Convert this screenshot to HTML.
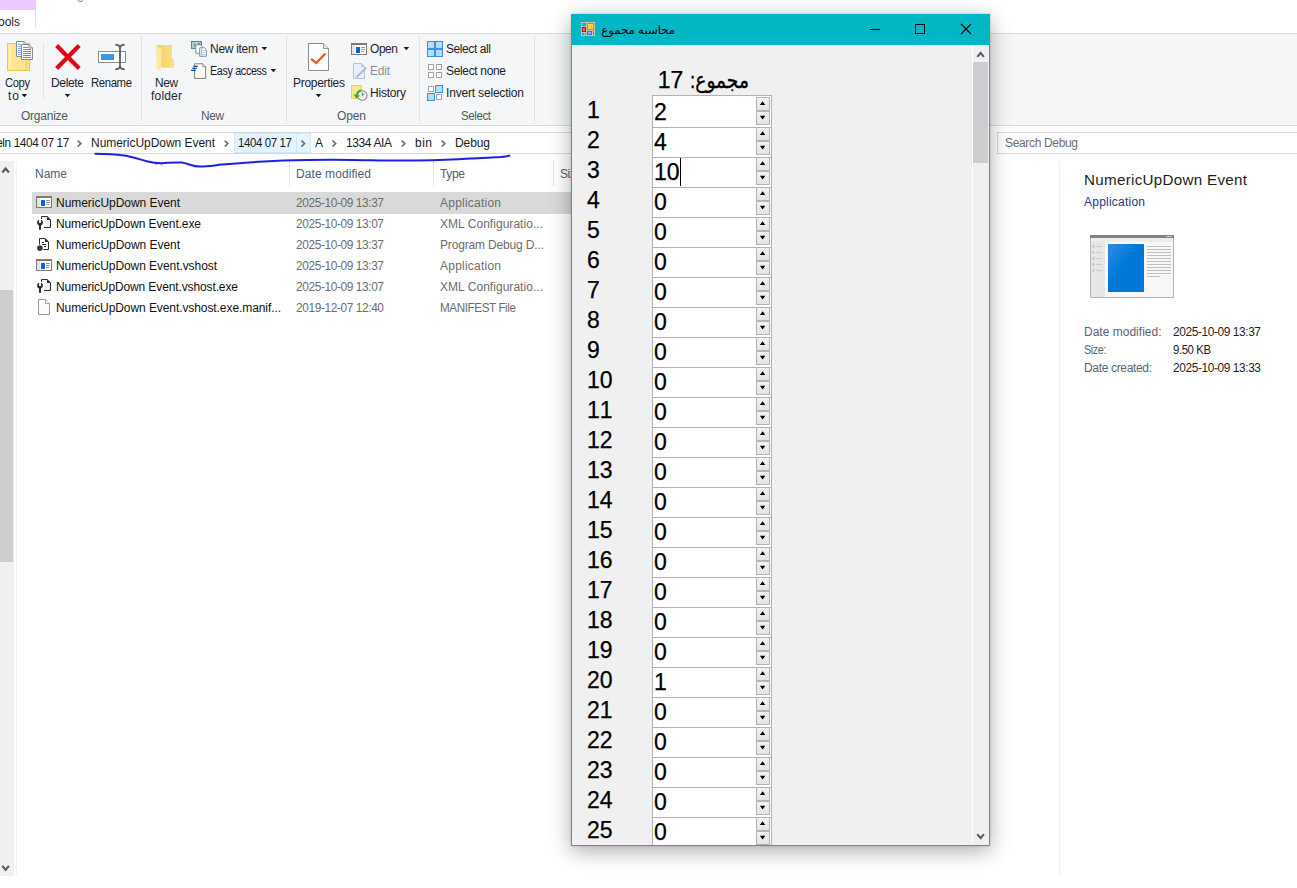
<!DOCTYPE html>
<html lang="en"><head><meta charset="utf-8"><title>Debug</title>
<style>
html,body{margin:0;padding:0;background:#fff;}
body{width:1297px;height:888px;overflow:hidden;font-family:"Liberation Sans","DejaVu Sans",sans-serif;}
#root{position:relative;width:1297px;height:888px;overflow:hidden;background:#fff;}
.a{position:absolute;}
.t{position:absolute;white-space:nowrap;font-family:"Liberation Sans","DejaVu Sans",sans-serif;}
svg{position:absolute;overflow:visible;}

.nud{position:absolute;left:652px;width:120px;height:33px;box-sizing:border-box;border:1px solid #b0b2b8;background:#fff;}
.nud i{position:absolute;left:103px;width:14px;height:14px;box-sizing:border-box;border:1px solid #b4b4b4;background:linear-gradient(#f3f3f3,#e4e4e4);}
.nud .ub{top:1px;}
.nud .db{top:15px;}

</style></head>
<body>
<div id="root">
<!-- tab strip -->
<div class="a" style="left:0;top:0;width:36px;height:10px;background:#ebcbfb"></div>
<div class="a" style="left:35px;top:10px;width:1px;height:18px;background:#e3e3e3"></div>
<!-- ribbon -->
<div class="a" id="ribbon" style="left:0;top:33px;width:1297px;height:93px;background:#f5f6f7;border-top:1px solid #dadbdc;border-bottom:1px solid #dadbdc;box-sizing:border-box"></div>
<div class="a" style="left:43px;top:43px;width:1px;height:55px;background:#e2e3e4"></div>
<div class="a" style="left:141px;top:36px;width:1px;height:86px;background:#e2e3e4"></div>
<div class="a" style="left:286px;top:36px;width:1px;height:86px;background:#e2e3e4"></div>
<div class="a" style="left:419px;top:36px;width:1px;height:86px;background:#e2e3e4"></div>
<div class="a" style="left:534px;top:36px;width:1px;height:86px;background:#e2e3e4"></div>
<!-- address bar -->
<div class="a" style="left:-2px;top:132px;width:990px;height:22px;border:1px solid #d9d9d9;box-sizing:border-box;background:#fff"></div>
<div class="a" style="left:234px;top:133px;width:77px;height:20px;background:#e5f3ff;border:1px solid #cce8ff;box-sizing:border-box"></div>
<div class="a" style="left:296px;top:133px;width:1px;height:20px;background:#cce8ff"></div>
<div class="a" style="left:997px;top:132px;width:310px;height:22px;border:1px solid #d9d9d9;box-sizing:border-box;background:#fff"></div>
<!-- nav pane scrollbar -->
<div class="a" style="left:0;top:161px;width:14px;height:715px;background:#f0f0f0"></div>
<div class="a" style="left:16px;top:161px;width:1px;height:715px;background:#f4f4f4"></div>
<div class="a" style="left:0;top:290px;width:13px;height:272px;background:#cdcdcd"></div>
<!-- column header separators -->
<div class="a" style="left:289px;top:161px;width:1px;height:25px;background:#e5e5e5"></div>
<div class="a" style="left:433px;top:161px;width:1px;height:25px;background:#e5e5e5"></div>
<div class="a" style="left:553px;top:161px;width:1px;height:25px;background:#e5e5e5"></div>
<!-- selected row -->
<div class="a" style="left:32px;top:192px;width:950px;height:22px;background:#d9d9d9"></div>
<!-- details pane sep -->
<div class="a" style="left:1059px;top:161px;width:1px;height:715px;background:#f0f0f0"></div>

<svg id="icons" style="left:0;top:0" width="1297" height="888" viewBox="0 0 1297 888">
<defs>
<linearGradient id="gfold" x1="0" y1="0" x2="1" y2="0"><stop offset="0" stop-color="#ffe896"/><stop offset="1" stop-color="#ffe184"/></linearGradient>
<linearGradient id="gnf" x1="0" y1="0" x2="1" y2="0"><stop offset="0" stop-color="#f3cf62"/><stop offset="1" stop-color="#fbe087"/></linearGradient>
<linearGradient id="gblue" x1="0" y1="0" x2="1" y2="1"><stop offset="0" stop-color="#2f8de2"/><stop offset="0.45" stop-color="#0078d7"/><stop offset="1" stop-color="#0078d7"/></linearGradient>
<linearGradient id="gbtn" x1="0" y1="0" x2="0" y2="1"><stop offset="0" stop-color="#f2f2f2"/><stop offset="1" stop-color="#e3e3e3"/></linearGradient>
</defs>
<!-- Copy to -->
<g>
<rect x="7.5" y="43.5" width="22" height="27" fill="url(#gfold)" stroke="#eac653"/>
<rect x="9.5" y="45" width="1" height="24" fill="#fff3c4"/>
<rect x="24.5" y="60" width="1" height="10" fill="#fff0b8"/>
<rect x="25.5" y="60" width="0.8" height="10" fill="#eac653"/>
<path d="M16.5 41.5 H24 L27.5 45 V56.5 H16.5 Z" fill="#fff" stroke="#8c8c8c"/>
<path d="M24 41.5 V45 H27.5" fill="none" stroke="#8c8c8c"/>
<g stroke="#7fb0f5" stroke-width="1"><path d="M18 44.5H21 M18 46.5H21 M18 48.5H21 M18 50.5H21 M18 52.5H21 M18 54.5H21"/></g>
<path d="M21.5 44.5 H29 L32.5 48 V59.5 H21.5 Z" fill="#fff" stroke="#8c8c8c"/>
<path d="M29 44.5 V48 H32.5" fill="none" stroke="#8c8c8c"/>
<g stroke="#4a90f0" stroke-width="1"><path d="M23 47.5H28 M23 49.5H31 M23 51.5H31 M23 53.5H31 M23 55.5H31 M23 57.5H31"/></g>
</g>
<!-- Delete X -->
<path d="M56.6 45.6 L79.2 68.4 M79.2 45.6 L56.6 68.4" stroke="#e30613" stroke-width="4.2" fill="none"/>
<!-- Rename -->
<g>
<rect x="98.5" y="51.5" width="27" height="11" fill="#fff" stroke="#8c8c8c"/>
<rect x="101" y="54" width="13" height="6" fill="#3c96e8"/>
<path d="M115.3 44.6 Q119.4 44.8 120 47.5 Q120.6 44.8 124.7 44.6 M115.3 69.4 Q119.4 69.2 120 66.5 Q120.6 69.2 124.7 69.4 M120 46.5 V67.5" fill="none" stroke="#5c5c5c" stroke-width="1.8"/>
</g>
<!-- New folder -->
<g>
<path d="M156.3 45 H172 V58.5 L174 59.5 V67.8 H158 Z" fill="url(#gnf)"/>
<path d="M156.3 45 L161.8 49.6 L161 71.6 L156.3 68.6 Z" fill="#fce9a6"/>
</g>
<!-- New item -->
<g>
<rect x="191.6" y="41.6" width="9.8" height="6.8" fill="#cfe6f5" stroke="#3d8eb9" stroke-width="1.2"/>
<rect x="193.5" y="43.2" width="2" height="3.5" fill="#7aa56a"/><rect x="197.5" y="43.2" width="3" height="1.2" fill="#3d6f9a"/>
<path d="M195.8 44.9 H200.6 L202.4 46.7 V53.3 H195.8 Z" fill="#fff" stroke="#8c8c8c"/>
<path d="M199.7 47.8 H204.6 L206.4 49.6 V56.3 H199.7 Z" fill="#fff" stroke="#8c8c8c"/>
<path d="M201.5 48.3 V55.8" stroke="#f0a0a8" stroke-width="0.9"/>
<path d="M200.3 50.5H205.8 M200.3 52.5H205.8 M200.3 54.5H205.8" stroke="#a8c8f0" stroke-width="0.9"/>
</g>
<!-- Easy access -->
<g>
<path d="M194.6 63.8 H202.8 L205.6 66.6 V78.4 H194.6 Z" fill="#fbfbfb" stroke="#808080"/>
<path d="M202.8 63.8 V66.6 H205.6" fill="#e4e4e4" stroke="#808080" stroke-width="0.8"/>
<path d="M193.3 66.4H197.8 M192.2 68.4H196.7 M191 70.4H195.8" stroke="#1458a6" stroke-width="1.1"/>
</g>
<!-- Properties -->
<g>
<path d="M308.5 43.5 H323.5 L328.5 48.5 V70.5 H308.5 Z" fill="#fdfdfd" stroke="#8c8c8c"/>
<path d="M323.5 43.5 V48.5 H328.5" fill="#ececec" stroke="#8c8c8c" stroke-width="0.9"/>
<path d="M311.2 58.8 L316.2 63 L325.4 53.5" fill="none" stroke="#f4511e" stroke-width="2.2"/>
</g>
<!-- Open -->
<g>
<rect x="351.5" y="43.5" width="15" height="11" fill="#fff" stroke="#7c7c7c"/>
<rect x="351" y="43" width="16" height="2" fill="#7c7c7c"/>
<rect x="352" y="45" width="3" height="9" fill="#e4e4e4"/>
<rect x="356" y="47" width="4" height="6" fill="#0a64d8"/>
<path d="M361 47.5H365 M361 49.5H365 M361 51.5H364" stroke="#8c8c8c" stroke-width="0.9"/>
</g>
<!-- Edit (disabled) -->
<g>
<path d="M353.5 63.5 H361.5 L364.5 66.5 V78.5 H353.5 Z" fill="#e9eefa" stroke="#b4c0da"/>
<path d="M361.5 63.5 V66.5 H364.5" fill="none" stroke="#b4c0da" stroke-width="0.9"/>
<path d="M366.3 67.8 L356.3 77.2" stroke="#b0bcd8" stroke-width="2"/>
</g>
<!-- History -->
<g>
<rect x="351.5" y="85.5" width="10" height="13" fill="#ffe58f" stroke="#f0cc5c"/>
<circle cx="362.3" cy="95.5" r="4.7" fill="#f3f3f3" stroke="#8c8c8c" stroke-width="1.1"/>
<path d="M362.3 92.5 V95.5 L364.5 94" fill="none" stroke="#555" stroke-width="0.8"/>
<path d="M353.2 94.2 L356.2 98.4 L360.2 95.6 Z" fill="#2db52d"/>
<path d="M356.8 95.5 Q357 91.5 361 90.3" fill="none" stroke="#2db52d" stroke-width="2"/>
</g>
<!-- Select all -->
<g fill="#b9dcfc" stroke="#3a91e6">
<rect x="427.5" y="41.5" width="7" height="7"/><rect x="435.5" y="41.5" width="7" height="7"/><rect x="427.5" y="49.5" width="7" height="7"/><rect x="435.5" y="49.5" width="7" height="7"/>
</g>
<!-- Select none -->
<g fill="#fff" stroke="#a3a3a3">
<rect x="428.5" y="64.5" width="5" height="5"/><rect x="436.5" y="64.5" width="5" height="5"/><rect x="428.5" y="72.5" width="5" height="5"/><rect x="436.5" y="72.5" width="5" height="5"/>
</g>
<!-- Invert selection -->
<g fill="#fff" stroke="#a3a3a3"><rect x="428.5" y="86.5" width="5" height="5"/><rect x="436.5" y="94.5" width="5" height="5"/></g>
<g fill="#b9dcfc" stroke="#3a91e6"><rect x="435.5" y="85.5" width="7" height="7"/><rect x="427.5" y="93.5" width="7" height="7"/></g>
<!-- FI0 --><g><rect x="36.5" y="196.5" width="15" height="11" fill="#fff" stroke="#7c7c7c"/><rect x="36" y="196" width="16" height="2" fill="#7c7c7c"/><rect x="37" y="198" width="3" height="9" fill="#e4e4e4"/><rect x="41" y="200" width="4" height="6" fill="#0a64d8"/><path d="M46 200.5H50 M46 202.5H50 M46 204.5H49" stroke="#8c8c8c" stroke-width="0.9"/></g>
<g><path d="M41.5 216.5 H47.2 L50.5 219.8 V227.5 H41.5 Z" fill="#f0f0f2" stroke="#2d2d2d" stroke-width="1"/><path d="M47 216.3 L50.7 220 H47 Z" fill="#2d2d2d"/><rect x="36.5" y="219" width="7.4" height="11.5" fill="#fff"/><path d="M37.2 222.8 A2.8 2.8 0 1 0 42.8 222.8 L42.8 221.2 L41.6 220 L40.9 220 V222.9 H39.1 V220 L38.4 220 L37.2 221.2 Z" fill="#2d2d2d"/><rect x="39" y="224" width="2" height="5.8" fill="#2d2d2d"/></g>
<g><path d="M39.5 238.5 H45.2 L48.5 241.8 V249.5 H39.5 Z" fill="#fff" stroke="#2d2d2d" stroke-width="1"/><path d="M45 238.3 L48.7 242 H45 Z" fill="#2d2d2d"/><path d="M42 242.5H44 M42 244.5H46 M44 246.5H46" stroke="#333" stroke-width="1"/><circle cx="39.9" cy="248.1" r="3.7" fill="#fff"/><circle cx="39.9" cy="248.1" r="2.85" fill="#3c3c3c"/></g>
<g><rect x="36.5" y="259.5" width="15" height="11" fill="#fff" stroke="#7c7c7c"/><rect x="36" y="259" width="16" height="2" fill="#7c7c7c"/><rect x="37" y="261" width="3" height="9" fill="#e4e4e4"/><rect x="41" y="263" width="4" height="6" fill="#0a64d8"/><path d="M46 263.5H50 M46 265.5H50 M46 267.5H49" stroke="#8c8c8c" stroke-width="0.9"/></g>
<g><path d="M41.5 279.5 H47.2 L50.5 282.8 V290.5 H41.5 Z" fill="#f0f0f2" stroke="#2d2d2d" stroke-width="1"/><path d="M47 279.3 L50.7 283 H47 Z" fill="#2d2d2d"/><rect x="36.5" y="282" width="7.4" height="11.5" fill="#fff"/><path d="M37.2 285.8 A2.8 2.8 0 1 0 42.8 285.8 L42.8 284.2 L41.6 283 L40.9 283 V285.9 H39.1 V283 L38.4 283 L37.2 284.2 Z" fill="#2d2d2d"/><rect x="39" y="287" width="2" height="5.8" fill="#2d2d2d"/></g>
<g><path d="M38.5 299.5 H45.5 L49.5 303.5 V314.5 H38.5 Z" fill="#fcfcfc" stroke="#9a9a9a"/><path d="M45.5 299.5 V303.5 H49.5" fill="#eee" stroke="#9a9a9a" stroke-width="0.8"/></g><!-- FI1 -->
<!-- preview icon -->
<g>
<rect x="1090.5" y="235.5" width="83" height="62" fill="#f7f7f7" stroke="#b4b4b4"/>
<rect x="1090" y="235" width="84" height="3" fill="#7f8388"/>
<rect x="1091" y="238" width="82" height="3.5" fill="#ececec"/>
<rect x="1091" y="241.5" width="14" height="55.5" fill="#e6e6e6"/>
<rect x="1108" y="244" width="36" height="48" fill="url(#gblue)"/>
<path d="M1147 246.5H1171 M1147 249.5H1171 M1147 252.5H1171 M1147 255.5H1171 M1147 258.5H1171 M1147 261.5H1171 M1147 264.5H1171 M1147 267.5H1171 M1147 270.5H1171 M1147 273.5H1171 M1147 276.5H1160" stroke="#b2b2b2" stroke-width="0.8"/>
<path d="M1096 246.5H1102.5 M1096 252.5H1102.5 M1096 258.5H1102.5 M1096 264.5H1102.5 M1096 270.5H1102.5" stroke="#bdbdbd" stroke-width="0.7"/>
<g fill="#c4c4c4"><circle cx="1093.4" cy="246.5" r="1.2"/><circle cx="1093.4" cy="252.5" r="1.2"/><circle cx="1093.4" cy="258.5" r="1.2"/><circle cx="1093.4" cy="264.5" r="1.2"/><circle cx="1093.4" cy="270.5" r="1.2"/></g>
<rect x="1166" y="236" width="6" height="1" fill="#c8c8c8"/>
</g>
<!-- arrows -->
<path d="M21.599999999999998 93.9 H27.2 L24.4 97.2 Z" fill="#1a1a1a"/>
<path d="M64.7 93.9 H70.3 L67.5 97.2 Z" fill="#1a1a1a"/>
<path d="M261.59999999999997 46.9 H267.2 L264.4 50.199999999999996 Z" fill="#1a1a1a"/>
<path d="M270.59999999999997 68.9 H276.2 L273.4 72.2 Z" fill="#1a1a1a"/>
<path d="M315.7 93.9 H321.3 L318.5 97.2 Z" fill="#1a1a1a"/>
<path d="M403.59999999999997 46.9 H409.2 L406.4 50.199999999999996 Z" fill="#1a1a1a"/>
<path d="M77.7 140.6 L80.9 143.6 L77.7 146.6" fill="none" stroke="#6a6a6a" stroke-width="1.5"/>
<path d="M224.7 140.6 L227.9 143.6 L224.7 146.6" fill="none" stroke="#6a6a6a" stroke-width="1.5"/>
<path d="M301.4 140.6 L304.6 143.6 L301.4 146.6" fill="none" stroke="#6a6a6a" stroke-width="1.5"/>
<path d="M332.5 140.6 L335.7 143.6 L332.5 146.6" fill="none" stroke="#6a6a6a" stroke-width="1.5"/>
<path d="M401.7 140.6 L404.9 143.6 L401.7 146.6" fill="none" stroke="#6a6a6a" stroke-width="1.5"/>
<path d="M441.7 140.6 L444.9 143.6 L441.7 146.6" fill="none" stroke="#6a6a6a" stroke-width="1.5"/>
<path d="M2.3 172.5 L5.6 168.5 L8.9 172.5" fill="none" stroke="#5a5a5a" stroke-width="2.1"/>
<path d="M2.3 865.8 L5.6 869.8 L8.9 865.8" fill="none" stroke="#5a5a5a" stroke-width="2.1"/>
<path d="M155.5 165.5 L159 162.2 L162.5 165.5" fill="none" stroke="#8a8a8a" stroke-width="0.9"/>
<!-- blue scribble -->
<path d="M95.3 153.7 C105 153.8 115 154.2 124 155.4 C133 156.8 140 159.5 147.8 161.5 C152 162.6 156 163.3 161.4 163.2 C168 163 175 162 181.8 162.6 C188 163.3 193 166.8 200.4 166.6 C208 166.4 214 165.4 222.5 164.6 C243 162.6 262 161.3 283.5 160.5 C306 159.8 328 159.7 351.4 159.9 C374 160.2 396 160.9 419.2 160.5 C436 160.2 453 159.6 470 158.5 C480 157.9 491 157.6 500.6 157.1 C504 156.8 507 156.4 509.5 155.6" fill="none" stroke="#1a22e0" stroke-width="2" stroke-linecap="round"/>
</svg>

<span class="t" style="right:1277px;top:13.84px;font-size:12px;line-height:16px;color:#222;">Application Tools</span>
<span class="t" style="right:1213.4px;top:-12.76px;font-size:12px;line-height:16px;color:#8a8a8a;">Debug</span>
<span class="t" style="left:5px;top:74.84px;font-size:12px;line-height:16px;color:#1e1e2d;letter-spacing:-0.400px;transform:scaleX(0.9323);transform-origin:0 50%;">Copy</span>
<span class="t" style="left:8px;top:87.84px;font-size:12px;line-height:16px;color:#1e1e2d;letter-spacing:0.984px;">to</span>
<span class="t" style="left:51px;top:74.84px;font-size:12px;line-height:16px;color:#1e1e2d;letter-spacing:-0.338px;">Delete</span>
<span class="t" style="left:91px;top:74.84px;font-size:12px;line-height:16px;color:#1e1e2d;letter-spacing:-0.400px;transform:scaleX(0.9456);transform-origin:0 50%;">Rename</span>
<span class="t" style="left:21px;top:107.84px;font-size:12px;line-height:16px;color:#525a65;letter-spacing:-0.243px;">Organize</span>
<span class="t" style="left:155px;top:74.84px;font-size:12px;line-height:16px;color:#1e1e2d;letter-spacing:-0.400px;transform:scaleX(0.9907);transform-origin:0 50%;">New</span>
<span class="t" style="left:151px;top:87.84px;font-size:12px;line-height:16px;color:#1e1e2d;letter-spacing:0.194px;">folder</span>
<span class="t" style="left:210px;top:40.84px;font-size:12px;line-height:16px;color:#1e1e2d;letter-spacing:-0.288px;">New item</span>
<span class="t" style="left:210px;top:62.84px;font-size:12px;line-height:16px;color:#1e1e2d;letter-spacing:-0.400px;transform:scaleX(0.8996);transform-origin:0 50%;">Easy access</span>
<span class="t" style="left:201px;top:107.84px;font-size:12px;line-height:16px;color:#525a65;letter-spacing:-0.400px;transform:scaleX(0.9907);transform-origin:0 50%;">New</span>
<span class="t" style="left:293px;top:74.84px;font-size:12px;line-height:16px;color:#1e1e2d;letter-spacing:-0.300px;">Properties</span>
<span class="t" style="left:370px;top:40.84px;font-size:12px;line-height:16px;color:#1e1e2d;letter-spacing:-0.400px;transform:scaleX(0.9943);transform-origin:0 50%;">Open</span>
<span class="t" style="left:370px;top:62.84px;font-size:12px;line-height:16px;color:#8d8d95;letter-spacing:-0.229px;">Edit</span>
<span class="t" style="left:370px;top:84.84px;font-size:12px;line-height:16px;color:#1e1e2d;letter-spacing:-0.224px;">History</span>
<span class="t" style="left:337px;top:107.84px;font-size:12px;line-height:16px;color:#525a65;letter-spacing:-0.120px;">Open</span>
<span class="t" style="left:446px;top:40.84px;font-size:12px;line-height:16px;color:#1e1e2d;letter-spacing:-0.400px;transform:scaleX(0.9977);transform-origin:0 50%;">Select all</span>
<span class="t" style="left:446px;top:62.84px;font-size:12px;line-height:16px;color:#1e1e2d;letter-spacing:-0.339px;">Select none</span>
<span class="t" style="left:446px;top:84.84px;font-size:12px;line-height:16px;color:#1e1e2d;letter-spacing:-0.181px;">Invert selection</span>
<span class="t" style="left:461px;top:107.84px;font-size:12px;line-height:16px;color:#525a65;letter-spacing:-0.400px;transform:scaleX(0.9567);transform-origin:0 50%;">Select</span>
<span class="t" style="right:1228.7px;top:134.84px;font-size:12px;line-height:16px;color:#1a1a1a;letter-spacing:-0.400px;transform:scaleX(0.9837);transform-origin:100% 50%;">eln 1404 07 17</span>
<span class="t" style="left:91px;top:134.84px;font-size:12px;line-height:16px;color:#1a1a1a;letter-spacing:-0.040px;">NumericUpDown Event</span>
<span class="t" style="left:238px;top:134.84px;font-size:12px;line-height:16px;color:#1a1a1a;letter-spacing:-0.400px;transform:scaleX(0.9564);transform-origin:0 50%;">1404 07 17</span>
<span class="t" style="left:315px;top:134.84px;font-size:12px;line-height:16px;color:#1a1a1a;">A</span>
<span class="t" style="left:346px;top:134.84px;font-size:12px;line-height:16px;color:#1a1a1a;letter-spacing:-0.388px;">1334 AIA</span>
<span class="t" style="left:415px;top:134.84px;font-size:12px;line-height:16px;color:#1a1a1a;letter-spacing:0.492px;">bin</span>
<span class="t" style="left:455px;top:134.84px;font-size:12px;line-height:16px;color:#1a1a1a;letter-spacing:-0.094px;">Debug</span>
<span class="t" style="left:1005px;top:134.84px;font-size:12px;line-height:16px;color:#6d6d6d;letter-spacing:-0.338px;">Search Debug</span>
<span class="t" style="left:35px;top:165.84px;font-size:12px;line-height:16px;color:#4c607a;letter-spacing:-0.005px;">Name</span>
<span class="t" style="left:296px;top:165.84px;font-size:12px;line-height:16px;color:#4c607a;letter-spacing:0.079px;">Date modified</span>
<span class="t" style="left:440px;top:165.84px;font-size:12px;line-height:16px;color:#4c607a;letter-spacing:-0.339px;">Type</span>
<span class="t" style="left:560px;top:165.84px;font-size:12px;line-height:16px;color:#4c607a;letter-spacing:-0.400px;transform:scaleX(0.9935);transform-origin:0 50%;">Size</span>
<span class="t" style="left:56px;top:194.84px;font-size:12px;line-height:16px;color:#111;letter-spacing:-0.040px;">NumericUpDown Event</span>
<span class="t" style="left:296px;top:194.84px;font-size:12px;line-height:16px;color:#6d6d6d;letter-spacing:-0.400px;transform:scaleX(0.9915);transform-origin:0 50%;">2025-10-09 13:37</span>
<span class="t" style="left:440px;top:194.84px;font-size:12px;line-height:16px;color:#6d6d6d;letter-spacing:0.228px;">Application</span>
<span class="t" style="left:56px;top:215.84px;font-size:12px;line-height:16px;color:#111;letter-spacing:-0.109px;">NumericUpDown Event.exe</span>
<span class="t" style="left:296px;top:215.84px;font-size:12px;line-height:16px;color:#6d6d6d;letter-spacing:-0.400px;transform:scaleX(0.9915);transform-origin:0 50%;">2025-10-09 13:07</span>
<span class="t" style="left:440px;top:215.84px;font-size:12px;line-height:16px;color:#6d6d6d;letter-spacing:0.040px;">XML Configuratio...</span>
<span class="t" style="left:56px;top:236.84px;font-size:12px;line-height:16px;color:#111;letter-spacing:-0.040px;">NumericUpDown Event</span>
<span class="t" style="left:296px;top:236.84px;font-size:12px;line-height:16px;color:#6d6d6d;letter-spacing:-0.400px;transform:scaleX(0.9915);transform-origin:0 50%;">2025-10-09 13:37</span>
<span class="t" style="left:440px;top:236.84px;font-size:12px;line-height:16px;color:#6d6d6d;letter-spacing:-0.160px;">Program Debug D...</span>
<span class="t" style="left:56px;top:257.84px;font-size:12px;line-height:16px;color:#111;letter-spacing:-0.069px;">NumericUpDown Event.vshost</span>
<span class="t" style="left:296px;top:257.84px;font-size:12px;line-height:16px;color:#6d6d6d;letter-spacing:-0.400px;transform:scaleX(0.9915);transform-origin:0 50%;">2025-10-09 13:37</span>
<span class="t" style="left:440px;top:257.84px;font-size:12px;line-height:16px;color:#6d6d6d;letter-spacing:0.228px;">Application</span>
<span class="t" style="left:56px;top:278.84px;font-size:12px;line-height:16px;color:#111;letter-spacing:-0.118px;">NumericUpDown Event.vshost.exe</span>
<span class="t" style="left:296px;top:278.84px;font-size:12px;line-height:16px;color:#6d6d6d;letter-spacing:-0.400px;transform:scaleX(0.9915);transform-origin:0 50%;">2025-10-09 13:07</span>
<span class="t" style="left:440px;top:278.84px;font-size:12px;line-height:16px;color:#6d6d6d;letter-spacing:0.040px;">XML Configuratio...</span>
<span class="t" style="left:56px;top:299.84px;font-size:12px;line-height:16px;color:#111;letter-spacing:-0.081px;">NumericUpDown Event.vshost.exe.manif...</span>
<span class="t" style="left:296px;top:299.84px;font-size:12px;line-height:16px;color:#6d6d6d;letter-spacing:-0.400px;transform:scaleX(0.9915);transform-origin:0 50%;">2019-12-07 12:40</span>
<span class="t" style="left:440px;top:299.84px;font-size:12px;line-height:16px;color:#6d6d6d;letter-spacing:-0.400px;transform:scaleX(0.9703);transform-origin:0 50%;">MANIFEST File</span>
<span class="t" style="left:1084px;top:169.73px;font-size:15.2px;line-height:20px;color:#1e1e1e;letter-spacing:0.286px;">NumericUpDown Event</span>
<span class="t" style="left:1084px;top:193.84px;font-size:12px;line-height:16px;color:#2b357f;letter-spacing:0.228px;">Application</span>
<span class="t" style="left:1084px;top:323.84px;font-size:12px;line-height:16px;color:#5a6470;letter-spacing:0.010px;">Date modified:</span>
<span class="t" style="left:1084px;top:341.84px;font-size:12px;line-height:16px;color:#5a6470;letter-spacing:-0.400px;transform:scaleX(0.8969);transform-origin:0 50%;">Size:</span>
<span class="t" style="left:1084px;top:359.84px;font-size:12px;line-height:16px;color:#5a6470;letter-spacing:-0.337px;">Date created:</span>
<span class="t" style="left:1173px;top:323.84px;font-size:12px;line-height:16px;color:#1e1e1e;letter-spacing:-0.400px;transform:scaleX(0.9915);transform-origin:0 50%;">2025-10-09 13:37</span>
<span class="t" style="left:1173px;top:341.84px;font-size:12px;line-height:16px;color:#1e1e1e;letter-spacing:-0.400px;transform:scaleX(0.9429);transform-origin:0 50%;">9.50 KB</span>
<span class="t" style="left:1173px;top:359.84px;font-size:12px;line-height:16px;color:#1e1e1e;letter-spacing:-0.400px;transform:scaleX(0.9915);transform-origin:0 50%;">2025-10-09 13:33</span>

<!-- form window -->
<div class="a" id="form" style="left:571px;top:14px;width:419px;height:832px;background:#f0f0f0;box-shadow:0 5px 20px rgba(0,0,0,0.33), 0 0 2px rgba(0,0,0,0.18);border:1px solid #00b7c3;border-top:0;box-sizing:border-box;overflow:hidden">
  <div class="a" style="left:-1px;top:0;width:419px;height:31px;background:#00b7c3"></div>
  <!--FORM-->
</div>

<div class="a" id="client" style="left:572px;top:45px;width:400px;height:800px;overflow:hidden"><div class="a" style="left:-572px;top:-45px;width:1297px;height:888px">
<div class="nud" style="top:815px"><i class="ub"></i><i class="db"></i></div>
<div class="nud" style="top:785px"><i class="ub"></i><i class="db"></i></div>
<div class="nud" style="top:755px"><i class="ub"></i><i class="db"></i></div>
<div class="nud" style="top:725px"><i class="ub"></i><i class="db"></i></div>
<div class="nud" style="top:695px"><i class="ub"></i><i class="db"></i></div>
<div class="nud" style="top:665px"><i class="ub"></i><i class="db"></i></div>
<div class="nud" style="top:635px"><i class="ub"></i><i class="db"></i></div>
<div class="nud" style="top:605px"><i class="ub"></i><i class="db"></i></div>
<div class="nud" style="top:575px"><i class="ub"></i><i class="db"></i></div>
<div class="nud" style="top:545px"><i class="ub"></i><i class="db"></i></div>
<div class="nud" style="top:515px"><i class="ub"></i><i class="db"></i></div>
<div class="nud" style="top:485px"><i class="ub"></i><i class="db"></i></div>
<div class="nud" style="top:455px"><i class="ub"></i><i class="db"></i></div>
<div class="nud" style="top:425px"><i class="ub"></i><i class="db"></i></div>
<div class="nud" style="top:395px"><i class="ub"></i><i class="db"></i></div>
<div class="nud" style="top:365px"><i class="ub"></i><i class="db"></i></div>
<div class="nud" style="top:335px"><i class="ub"></i><i class="db"></i></div>
<div class="nud" style="top:305px"><i class="ub"></i><i class="db"></i></div>
<div class="nud" style="top:275px"><i class="ub"></i><i class="db"></i></div>
<div class="nud" style="top:245px"><i class="ub"></i><i class="db"></i></div>
<div class="nud" style="top:215px"><i class="ub"></i><i class="db"></i></div>
<div class="nud" style="top:185px"><i class="ub"></i><i class="db"></i></div>
<div class="nud" style="top:155px"><i class="ub"></i><i class="db"></i></div>
<div class="nud" style="top:125px"><i class="ub"></i><i class="db"></i></div>
<div class="nud" style="top:95px"><i class="ub"></i><i class="db"></i></div>
<svg style="left:0;top:0" width="1297" height="888" viewBox="0 0 1297 888"><path d="M759.9 105.1 L762.6 101.3 L765.3 105.1 Z M759.9 115.7 L762.6 119.5 L765.3 115.7 Z M759.9 135.1 L762.6 131.3 L765.3 135.1 Z M759.9 145.7 L762.6 149.5 L765.3 145.7 Z M759.9 165.1 L762.6 161.3 L765.3 165.1 Z M759.9 175.7 L762.6 179.5 L765.3 175.7 Z M759.9 195.1 L762.6 191.3 L765.3 195.1 Z M759.9 205.7 L762.6 209.5 L765.3 205.7 Z M759.9 225.1 L762.6 221.3 L765.3 225.1 Z M759.9 235.7 L762.6 239.5 L765.3 235.7 Z M759.9 255.1 L762.6 251.3 L765.3 255.1 Z M759.9 265.7 L762.6 269.5 L765.3 265.7 Z M759.9 285.1 L762.6 281.3 L765.3 285.1 Z M759.9 295.7 L762.6 299.5 L765.3 295.7 Z M759.9 315.1 L762.6 311.3 L765.3 315.1 Z M759.9 325.7 L762.6 329.5 L765.3 325.7 Z M759.9 345.1 L762.6 341.3 L765.3 345.1 Z M759.9 355.7 L762.6 359.5 L765.3 355.7 Z M759.9 375.1 L762.6 371.3 L765.3 375.1 Z M759.9 385.7 L762.6 389.5 L765.3 385.7 Z M759.9 405.1 L762.6 401.3 L765.3 405.1 Z M759.9 415.7 L762.6 419.5 L765.3 415.7 Z M759.9 435.1 L762.6 431.3 L765.3 435.1 Z M759.9 445.7 L762.6 449.5 L765.3 445.7 Z M759.9 465.1 L762.6 461.3 L765.3 465.1 Z M759.9 475.7 L762.6 479.5 L765.3 475.7 Z M759.9 495.1 L762.6 491.3 L765.3 495.1 Z M759.9 505.7 L762.6 509.5 L765.3 505.7 Z M759.9 525.1 L762.6 521.3 L765.3 525.1 Z M759.9 535.7 L762.6 539.5 L765.3 535.7 Z M759.9 555.1 L762.6 551.3 L765.3 555.1 Z M759.9 565.7 L762.6 569.5 L765.3 565.7 Z M759.9 585.1 L762.6 581.3 L765.3 585.1 Z M759.9 595.7 L762.6 599.5 L765.3 595.7 Z M759.9 615.1 L762.6 611.3 L765.3 615.1 Z M759.9 625.7 L762.6 629.5 L765.3 625.7 Z M759.9 645.1 L762.6 641.3 L765.3 645.1 Z M759.9 655.7 L762.6 659.5 L765.3 655.7 Z M759.9 675.1 L762.6 671.3 L765.3 675.1 Z M759.9 685.7 L762.6 689.5 L765.3 685.7 Z M759.9 705.1 L762.6 701.3 L765.3 705.1 Z M759.9 715.7 L762.6 719.5 L765.3 715.7 Z M759.9 735.1 L762.6 731.3 L765.3 735.1 Z M759.9 745.7 L762.6 749.5 L765.3 745.7 Z M759.9 765.1 L762.6 761.3 L765.3 765.1 Z M759.9 775.7 L762.6 779.5 L765.3 775.7 Z M759.9 795.1 L762.6 791.3 L765.3 795.1 Z M759.9 805.7 L762.6 809.5 L765.3 805.7 Z M759.9 825.1 L762.6 821.3 L765.3 825.1 Z M759.9 835.7 L762.6 839.5 L765.3 835.7 Z" fill="#000"/></svg>
<span class="t" style="left:587px;top:95.03px;font-size:23px;line-height:30px;color:#000;-webkit-text-stroke:0.25px #000;font-kerning:none;">1</span>
<span class="t" style="left:587px;top:125.03px;font-size:23px;line-height:30px;color:#000;-webkit-text-stroke:0.25px #000;font-kerning:none;">2</span>
<span class="t" style="left:587px;top:155.03px;font-size:23px;line-height:30px;color:#000;-webkit-text-stroke:0.25px #000;font-kerning:none;">3</span>
<span class="t" style="left:587px;top:185.03px;font-size:23px;line-height:30px;color:#000;-webkit-text-stroke:0.25px #000;font-kerning:none;">4</span>
<span class="t" style="left:587px;top:215.03px;font-size:23px;line-height:30px;color:#000;-webkit-text-stroke:0.25px #000;font-kerning:none;">5</span>
<span class="t" style="left:587px;top:245.03px;font-size:23px;line-height:30px;color:#000;-webkit-text-stroke:0.25px #000;font-kerning:none;">6</span>
<span class="t" style="left:587px;top:275.03px;font-size:23px;line-height:30px;color:#000;-webkit-text-stroke:0.25px #000;font-kerning:none;">7</span>
<span class="t" style="left:587px;top:305.03px;font-size:23px;line-height:30px;color:#000;-webkit-text-stroke:0.25px #000;font-kerning:none;">8</span>
<span class="t" style="left:587px;top:335.03px;font-size:23px;line-height:30px;color:#000;-webkit-text-stroke:0.25px #000;font-kerning:none;">9</span>
<span class="t" style="left:587px;top:365.03px;font-size:23px;line-height:30px;color:#000;-webkit-text-stroke:0.25px #000;font-kerning:none;">10</span>
<span class="t" style="left:587px;top:395.03px;font-size:23px;line-height:30px;color:#000;-webkit-text-stroke:0.25px #000;font-kerning:none;">11</span>
<span class="t" style="left:587px;top:425.03px;font-size:23px;line-height:30px;color:#000;-webkit-text-stroke:0.25px #000;font-kerning:none;">12</span>
<span class="t" style="left:587px;top:455.03px;font-size:23px;line-height:30px;color:#000;-webkit-text-stroke:0.25px #000;font-kerning:none;">13</span>
<span class="t" style="left:587px;top:485.03px;font-size:23px;line-height:30px;color:#000;-webkit-text-stroke:0.25px #000;font-kerning:none;">14</span>
<span class="t" style="left:587px;top:515.03px;font-size:23px;line-height:30px;color:#000;-webkit-text-stroke:0.25px #000;font-kerning:none;">15</span>
<span class="t" style="left:587px;top:545.03px;font-size:23px;line-height:30px;color:#000;-webkit-text-stroke:0.25px #000;font-kerning:none;">16</span>
<span class="t" style="left:587px;top:575.03px;font-size:23px;line-height:30px;color:#000;-webkit-text-stroke:0.25px #000;font-kerning:none;">17</span>
<span class="t" style="left:587px;top:605.03px;font-size:23px;line-height:30px;color:#000;-webkit-text-stroke:0.25px #000;font-kerning:none;">18</span>
<span class="t" style="left:587px;top:635.03px;font-size:23px;line-height:30px;color:#000;-webkit-text-stroke:0.25px #000;font-kerning:none;">19</span>
<span class="t" style="left:587px;top:665.03px;font-size:23px;line-height:30px;color:#000;-webkit-text-stroke:0.25px #000;font-kerning:none;">20</span>
<span class="t" style="left:587px;top:695.03px;font-size:23px;line-height:30px;color:#000;-webkit-text-stroke:0.25px #000;font-kerning:none;">21</span>
<span class="t" style="left:587px;top:725.03px;font-size:23px;line-height:30px;color:#000;-webkit-text-stroke:0.25px #000;font-kerning:none;">22</span>
<span class="t" style="left:587px;top:755.03px;font-size:23px;line-height:30px;color:#000;-webkit-text-stroke:0.25px #000;font-kerning:none;">23</span>
<span class="t" style="left:587px;top:785.03px;font-size:23px;line-height:30px;color:#000;-webkit-text-stroke:0.25px #000;font-kerning:none;">24</span>
<span class="t" style="left:587px;top:815.03px;font-size:23px;line-height:30px;color:#000;-webkit-text-stroke:0.25px #000;font-kerning:none;">25</span>
<span class="t" style="left:654px;top:97.03px;font-size:23px;line-height:30px;color:#000;-webkit-text-stroke:0.25px #000;font-kerning:none;">2</span>
<span class="t" style="left:654px;top:127.03px;font-size:23px;line-height:30px;color:#000;-webkit-text-stroke:0.25px #000;font-kerning:none;">4</span>
<span class="t" style="left:654px;top:157.03px;font-size:23px;line-height:30px;color:#000;-webkit-text-stroke:0.25px #000;font-kerning:none;">10</span>
<span class="t" style="left:654px;top:187.03px;font-size:23px;line-height:30px;color:#000;-webkit-text-stroke:0.25px #000;font-kerning:none;">0</span>
<span class="t" style="left:654px;top:217.03px;font-size:23px;line-height:30px;color:#000;-webkit-text-stroke:0.25px #000;font-kerning:none;">0</span>
<span class="t" style="left:654px;top:247.03px;font-size:23px;line-height:30px;color:#000;-webkit-text-stroke:0.25px #000;font-kerning:none;">0</span>
<span class="t" style="left:654px;top:277.03px;font-size:23px;line-height:30px;color:#000;-webkit-text-stroke:0.25px #000;font-kerning:none;">0</span>
<span class="t" style="left:654px;top:307.03px;font-size:23px;line-height:30px;color:#000;-webkit-text-stroke:0.25px #000;font-kerning:none;">0</span>
<span class="t" style="left:654px;top:337.03px;font-size:23px;line-height:30px;color:#000;-webkit-text-stroke:0.25px #000;font-kerning:none;">0</span>
<span class="t" style="left:654px;top:367.03px;font-size:23px;line-height:30px;color:#000;-webkit-text-stroke:0.25px #000;font-kerning:none;">0</span>
<span class="t" style="left:654px;top:397.03px;font-size:23px;line-height:30px;color:#000;-webkit-text-stroke:0.25px #000;font-kerning:none;">0</span>
<span class="t" style="left:654px;top:427.03px;font-size:23px;line-height:30px;color:#000;-webkit-text-stroke:0.25px #000;font-kerning:none;">0</span>
<span class="t" style="left:654px;top:457.03px;font-size:23px;line-height:30px;color:#000;-webkit-text-stroke:0.25px #000;font-kerning:none;">0</span>
<span class="t" style="left:654px;top:487.03px;font-size:23px;line-height:30px;color:#000;-webkit-text-stroke:0.25px #000;font-kerning:none;">0</span>
<span class="t" style="left:654px;top:517.03px;font-size:23px;line-height:30px;color:#000;-webkit-text-stroke:0.25px #000;font-kerning:none;">0</span>
<span class="t" style="left:654px;top:547.03px;font-size:23px;line-height:30px;color:#000;-webkit-text-stroke:0.25px #000;font-kerning:none;">0</span>
<span class="t" style="left:654px;top:577.03px;font-size:23px;line-height:30px;color:#000;-webkit-text-stroke:0.25px #000;font-kerning:none;">0</span>
<span class="t" style="left:654px;top:607.03px;font-size:23px;line-height:30px;color:#000;-webkit-text-stroke:0.25px #000;font-kerning:none;">0</span>
<span class="t" style="left:654px;top:637.03px;font-size:23px;line-height:30px;color:#000;-webkit-text-stroke:0.25px #000;font-kerning:none;">0</span>
<span class="t" style="left:654px;top:667.03px;font-size:23px;line-height:30px;color:#000;-webkit-text-stroke:0.25px #000;font-kerning:none;">1</span>
<span class="t" style="left:654px;top:697.03px;font-size:23px;line-height:30px;color:#000;-webkit-text-stroke:0.25px #000;font-kerning:none;">0</span>
<span class="t" style="left:654px;top:727.03px;font-size:23px;line-height:30px;color:#000;-webkit-text-stroke:0.25px #000;font-kerning:none;">0</span>
<span class="t" style="left:654px;top:757.03px;font-size:23px;line-height:30px;color:#000;-webkit-text-stroke:0.25px #000;font-kerning:none;">0</span>
<span class="t" style="left:654px;top:787.03px;font-size:23px;line-height:30px;color:#000;-webkit-text-stroke:0.25px #000;font-kerning:none;">0</span>
<span class="t" style="left:654px;top:817.03px;font-size:23px;line-height:30px;color:#000;-webkit-text-stroke:0.25px #000;font-kerning:none;">0</span>
<span class="t" style="left:657.7px;top:65.03px;font-size:23px;line-height:30px;color:#000;-webkit-text-stroke:0.25px #000;font-kerning:none;">17</span>
<span class="t" style="right:548px;top:66.20px;font-size:22.5px;line-height:29px;color:#000;direction:rtl;transform:scaleX(0.83);transform-origin:100% 50%;-webkit-text-stroke:0.3px #000;">مجموع:</span>
<div class="a" style="left:680px;top:158px;width:1px;height:28px;background:#000"></div>
</div></div>
<!-- form scrollbar -->
<div class="a" style="left:972px;top:45px;width:1px;height:800px;background:#fff"></div>
<div class="a" style="left:973px;top:62px;width:15px;height:101px;background:#cdcdcd"></div>
<svg style="left:976px;top:50.6px" width="10" height="8" viewBox="0 0 10 8"><path d="M1.3 5.9 L4.6 1.9 L7.9 5.9" fill="none" stroke="#5a5a5a" stroke-width="2.1"/></svg>
<svg style="left:976px;top:832px" width="10" height="8" viewBox="0 0 10 8"><path d="M1.3 2.2 L4.6 6.2 L7.9 2.2" fill="none" stroke="#5a5a5a" stroke-width="2.1"/></svg>
<!-- window buttons -->
<div class="a" style="left:870px;top:29px;width:10px;height:1px;background:#000"></div>
<div class="a" style="left:915px;top:24px;width:10px;height:10px;border:1px solid #000;box-sizing:border-box"></div>
<svg style="left:961px;top:24px" width="10" height="10" viewBox="0 0 10 10"><path d="M0 0 L10 10 M10 0 L0 10" stroke="#000" stroke-width="1.1" fill="none"/></svg>
<!-- title icon -->
<svg style="left:581px;top:22px" width="14" height="14" viewBox="0 0 14 14"><rect x="0" y="0" width="14" height="14" fill="#cbbcb8"/><rect x="1" y="1" width="4" height="3" fill="#00b7c3"/><rect x="1" y="11" width="2" height="2" fill="#00b7c3"/><rect x="4" y="11" width="1" height="2" fill="#00b7c3"/><rect x="12" y="9" width="1" height="4" fill="#00b7c3"/><rect x="1" y="5" width="4" height="5" fill="#b8140c"/><rect x="2" y="6" width="2" height="3" fill="#f06a60"/><rect x="6" y="1" width="7" height="7" fill="#c8920a"/><rect x="7" y="2" width="5" height="5" fill="#ffd84a"/><rect x="6" y="9" width="5" height="4" fill="#3f6fd8"/><rect x="7" y="10" width="3" height="2" fill="#8fb4ff"/></svg>


<span class="t" style="left:601.3px;top:22.45px;font-size:11.7px;line-height:15px;color:#000;direction:rtl;">محاسبه مجموع</span>

</div>
</body></html>
